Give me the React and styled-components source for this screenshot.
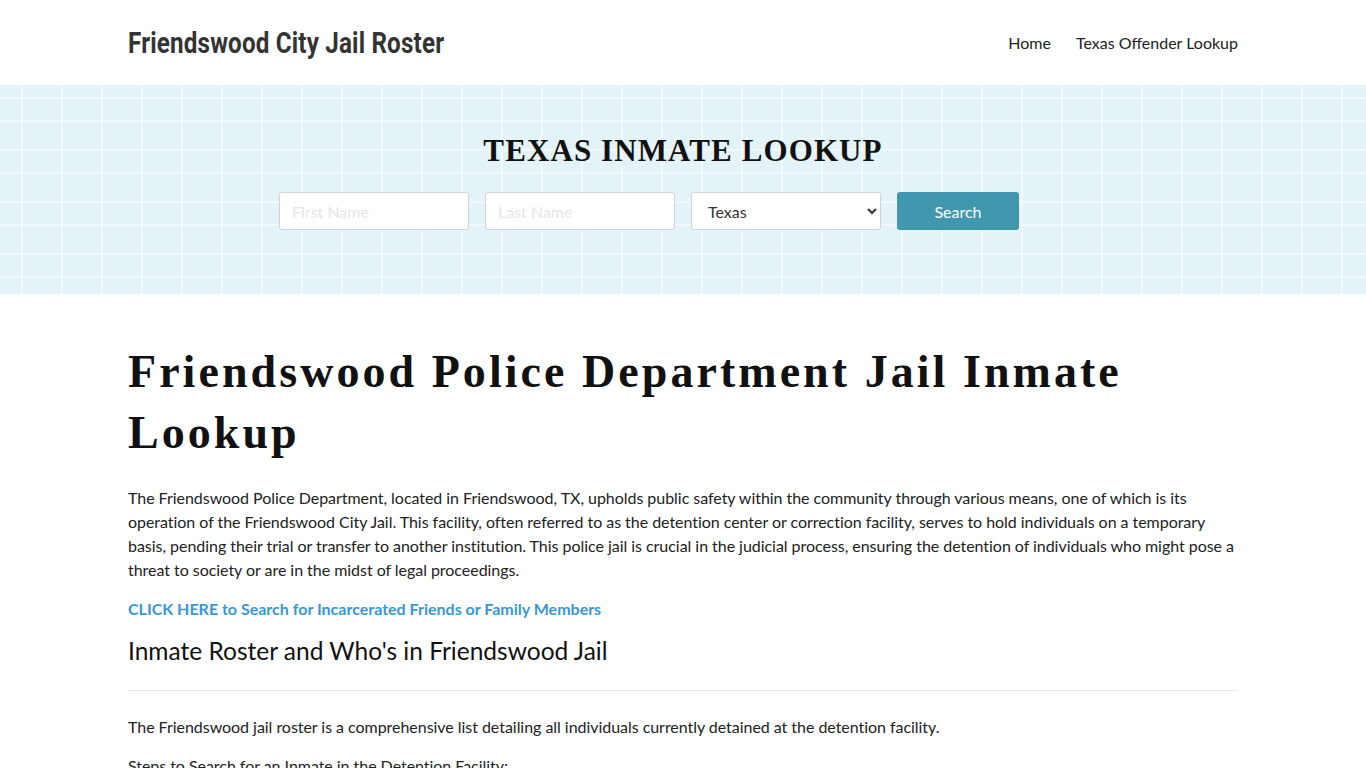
import React from 'react'
import styled, { createGlobalStyle } from 'styled-components'

const GlobalStyle = createGlobalStyle`
  html, body {
    margin: 0;
    padding: 0;
    background: #fff;
  }
  body {
    font-family: 'Lato', 'Liberation Sans', sans-serif;
    color: #222;
  }
  * {
    box-sizing: border-box;
  }
`

const App = () => {
  return (
    <>
      <GlobalStyle />
      <Header>
        <Container>
          <HeaderRow>
            <Logo href="#">Friendswood City Jail Roster</Logo>
            <Nav>
              <NavLink href="#">Home</NavLink>
              <NavLink href="#">Texas Offender Lookup</NavLink>
            </Nav>
          </HeaderRow>
        </Container>
      </Header>

      <Hero>
        <HeroTitle>Texas Inmate Lookup</HeroTitle>
        <SearchForm onSubmit={(e) => e.preventDefault()}>
          <Field type="text" placeholder="First Name" />
          <Field type="text" placeholder="Last Name" />
          <Select defaultValue="Texas">
            <option>Texas</option>
          </Select>
          <SearchButton type="submit">Search</SearchButton>
        </SearchForm>
      </Hero>

      <Main>
        <Container>
          <PageTitle>Friendswood Police Department Jail Inmate Lookup</PageTitle>
          <Paragraph>
            The Friendswood Police Department, located in Friendswood, TX, upholds public safety within the
            community through various means, one of which is its operation of the Friendswood City Jail. This
            facility, often referred to as the detention center or correction facility, serves to hold individuals
            on a temporary basis, pending their trial or transfer to another institution. This police jail is
            crucial in the judicial process, ensuring the detention of individuals who might pose a threat to
            society or are in the midst of legal proceedings.
          </Paragraph>
          <Paragraph>
            <StrongLink href="#">CLICK HERE to Search for Incarcerated Friends or Family Members</StrongLink>
          </Paragraph>
          <SectionTitle>Inmate Roster and Who's in Friendswood Jail</SectionTitle>
          <Rule />
          <Paragraph>
            The Friendswood jail roster is a comprehensive list detailing all individuals currently detained at
            the detention facility.
          </Paragraph>
          <Paragraph>Steps to Search for an Inmate in the Detention Facility:</Paragraph>
        </Container>
      </Main>
    </>
  )
}

const Container = styled.div`
  width: 1110px;
  margin: 0 auto;
`

const Header = styled.header`
  height: 85px;
  background: #fff;
`

const HeaderRow = styled.div`
  height: 85px;
  display: flex;
  align-items: center;
  justify-content: space-between;
`

/* condensed wordmark: Roboto squeezed horizontally */
const Logo = styled.a`
  display: inline-block;
  font-family: 'Roboto', 'DejaVu Sans Condensed', sans-serif;
  font-weight: 700;
  font-size: 29px;
  letter-spacing: 0.2px;
  color: #333;
  text-decoration: none;
  transform: scaleX(0.835);
  transform-origin: left center;
  margin-top: 1px;
`

const Nav = styled.nav`
  display: flex;
  gap: 25px;
`

const NavLink = styled.a`
  font-size: 16px;
  color: #222;
  text-decoration: none;
`

const Hero = styled.section`
  height: 209px;
  padding-top: 48px;
  background-color: #e3f3f7;
  background-image:
    repeating-linear-gradient(90deg, transparent 0 21px, rgba(255, 255, 255, 0.5) 21px 23px, transparent 23px 40px),
    repeating-linear-gradient(180deg, transparent 0 12px, rgba(255, 255, 255, 0.5) 12px 14px, transparent 14px 35px, rgba(255, 255, 255, 0.5) 35px 37px, transparent 37px 52px);
`

const HeroTitle = styled.h1`
  margin: 0 0 23px;
  text-align: center;
  font-family: 'Liberation Serif', 'DejaVu Serif', serif;
  font-weight: 700;
  font-size: 31px;
  line-height: 36px;
  letter-spacing: 1.1px;
  text-transform: uppercase;
  color: #111;
`

const SearchForm = styled.form`
  display: flex;
  justify-content: center;
  gap: 16px;
  padding-right: 68px;
`

const Field = styled.input`
  width: 190px;
  height: 38px;
  padding: 6px 12px;
  border: 1px solid #ced4da;
  border-radius: 3px;
  background: #fff;
  font-family: 'Lato', sans-serif;
  font-size: 16px;
  color: #495057;
  &::placeholder {
    color: #e6e6e6;
  }
`

const Select = styled.select`
  width: 190px;
  height: 38px;
  padding: 6px 12px;
  border: 1px solid #ced4da;
  border-radius: 3px;
  background: #fff;
  font-family: 'Lato', sans-serif;
  font-size: 16px;
  color: #333;
`

const SearchButton = styled.button`
  width: 122px;
  height: 38px;
  border: none;
  border-radius: 3px;
  background: #4097ae;
  color: #fff;
  font-family: 'Lato', sans-serif;
  font-size: 16px;
`

const Main = styled.main`
  padding-top: 47px;
`

const PageTitle = styled.h1`
  margin: 0 0 23px;
  font-family: 'Liberation Serif', 'DejaVu Serif', serif;
  font-weight: 700;
  font-size: 46px;
  line-height: 61px;
  letter-spacing: 3.05px;
  color: #111;
`

const Paragraph = styled.p`
  margin: 0 0 15px;
  font-size: 16px;
  line-height: 24px;
  letter-spacing: -0.04px;
  color: #222;
`

const StrongLink = styled.a`
  font-weight: 700;
  letter-spacing: 0;
  color: #3a97d4;
  text-decoration: none;
`

const SectionTitle = styled.h2`
  margin: 0;
  font-size: 24.5px;
  font-weight: 400;
  line-height: 30px;
  color: #111;
`

const Rule = styled.hr`
  margin: 24px 0 24px;
  border: 0;
  border-top: 1px solid #e8e8e8;
`

export default App
